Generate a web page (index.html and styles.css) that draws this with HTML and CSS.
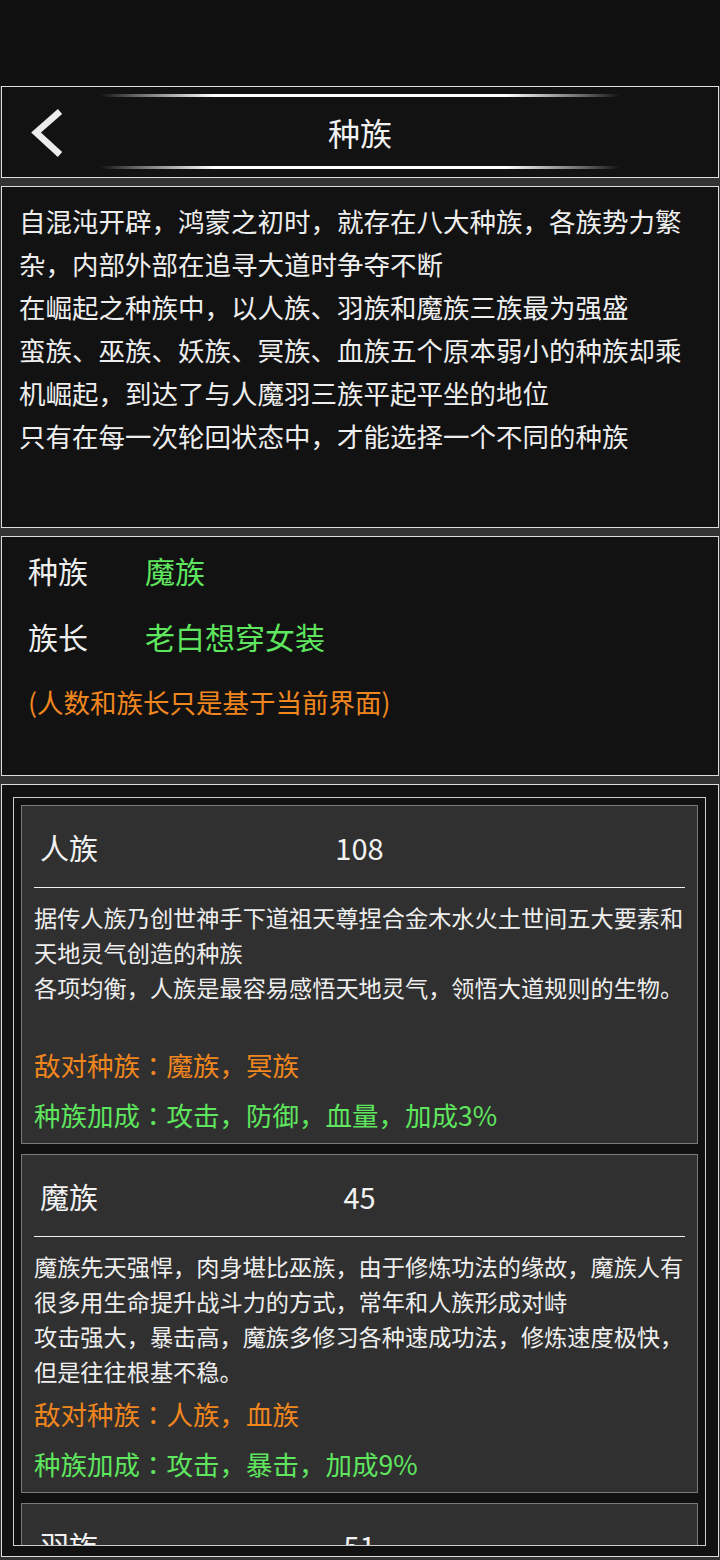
FILE: index.html
```html
<!DOCTYPE html>
<html lang="zh-CN">
<head>
    <meta charset="UTF-8">
    <meta name="viewport" content="width=device-width, initial-scale=1.0">
    <title>种族</title>
    <link rel="stylesheet" href="styles.css">
</head>
<body>
    <div class="status-bar"></div>

    <header class="panel topbar">
        <div class="glow"></div>
        <div class="topbar-row">
            <a class="back" href="#">
                <svg width="36" height="50" viewBox="0 0 36 50">
                    <polyline points="31,4.5 7,25.5 31,47.5" fill="none" stroke="#ececec" stroke-width="6.5" stroke-linejoin="miter"/>
                </svg>
            </a>
            <h1>种族</h1>
            <span></span>
        </div>
        <div class="glow"></div>
    </header>

    <section class="panel intro">
        <p>自混沌开辟，鸿蒙之初时，就存在八大种族，各族势力繁杂，内部外部在追寻大道时争夺不断</p>
        <p>在崛起之种族中，以人族、羽族和魔族三族最为强盛</p>
        <p>蛮族、巫族、妖族、冥族、血族五个原本弱小的种族却乘机崛起，到达了与人魔羽三族平起平坐的地位</p>
        <p>只有在每一次轮回状态中，才能选择一个不同的种族</p>
    </section>

    <section class="panel info">
        <div class="info-row">
            <span>种族</span>
            <span class="info-value">魔族</span>
        </div>
        <div class="info-row">
            <span>族长</span>
            <span class="info-value">老白想穿女装</span>
        </div>
        <p class="note">(人数和族长只是基于当前界面)</p>
    </section>

    <section class="panel list">
        <div class="list-frame">
            <div class="race-card">
                <div class="race-head">
                    <span class="race-name">人族</span>
                    <span class="race-count">108</span>
                </div>
                <div class="race-divider"></div>
                <div class="race-desc">
                    <p>据传人族乃创世神手下道祖天尊捏合金木水火土世间五大要素和天地灵气创造的种族</p>
                    <p>各项均衡，人族是最容易感悟天地灵气，领悟大道规则的生物。</p>
                </div>
                <p class="race-stat enemy">敌对种族<span class="colon" lang="ja">：</span>魔族，冥族</p>
                <p class="race-stat bonus">种族加成<span class="colon" lang="ja">：</span>攻击，防御，血量，加成3%</p>
            </div>

            <div class="race-card">
                <div class="race-head">
                    <span class="race-name">魔族</span>
                    <span class="race-count">45</span>
                </div>
                <div class="race-divider"></div>
                <div class="race-desc">
                    <p>魔族先天强悍，肉身堪比巫族，由于修炼功法的缘故，魔族人有很多用生命提升战斗力的方式，常年和人族形成对峙</p>
                    <p>攻击强大，暴击高，魔族多修习各种速成功法，修炼速度极快，但是往往根基不稳。</p>
                </div>
                <p class="race-stat enemy">敌对种族<span class="colon" lang="ja">：</span>人族，血族</p>
                <p class="race-stat bonus">种族加成<span class="colon" lang="ja">：</span>攻击，暴击，加成9%</p>
            </div>

            <div class="race-card">
                <div class="race-head">
                    <span class="race-name">羽族</span>
                    <span class="race-count">51</span>
                </div>
                <div class="race-divider"></div>
            </div>
        </div>
    </section>
</body>
</html>
```

FILE: styles.css
```css
body {
    margin: 0;
    background-color: #333;
    font-family: "Noto Sans CJK SC", "Noto Sans", sans-serif;
    color: #eee;
}
p {
    margin: 0;
}
.status-bar {
    height: 86px;
    background: #111;
}
.panel {
    margin: 0 1px 8px;
    border: 1px solid #ddd;
    background: #121212;
    box-sizing: border-box;
}

/* header */
.topbar {
    height: 92px;
    padding: 7px 0 8px;
}
.glow {
    width: 520px;
    height: 3px;
    margin: 0 auto;
    border-radius: 2px;
    background: linear-gradient(90deg, rgba(255, 255, 255, 0), #666 7%, #fff 22%, #fff 78%, #666 93%, rgba(255, 255, 255, 0));
}
.topbar-row {
    height: 69px;
    display: grid;
    grid-template-columns: 1fr auto 1fr;
    align-items: center;
}
.back {
    display: flex;
    padding-left: 27px;
}
.topbar h1 {
    margin: 0;
    font-size: 32px;
    font-weight: normal;
    color: #f2f2f2;
}

/* intro text */
.intro {
    height: 342px;
    padding: 12px 18px 0 17px;
    font-size: 26.5px;
    line-height: 43px;
}

/* current race */
.info {
    height: 240px;
    padding-left: 26px;
}
.info-row {
    display: grid;
    grid-template-columns: 117px 1fr;
    font-size: 30px;
    line-height: 66px;
}
.info-value {
    color: #5fe65f;
}
.note {
    font-size: 26.5px;
    line-height: 66px;
    color: #f0861e;
}

/* race list */
.list {
    height: 773px;
    margin-bottom: 0;
    padding: 12px 12px 11px 11px;
    background: #111;
}
.list-frame {
    height: 749px;
    padding: 7px;
    border: 1px solid #ccc;
    box-sizing: border-box;
    overflow: hidden;
}
.race-card {
    margin-bottom: 10px;
    padding: 0 12px 3px;
    border: 1px solid #7a7a7a;
    background: #303030;
}
.race-head {
    height: 80px;
    padding-top: 1px;
    display: grid;
    grid-template-columns: 1fr auto 1fr;
    align-items: center;
    font-size: 29px;
    color: #f2f2f2;
}
.race-name {
    padding-left: 6px;
}
.race-divider {
    height: 1px;
    background: #eee;
}
.race-desc {
    margin-top: 12px;
    min-height: 140px;
    font-size: 23.2px;
    line-height: 35px;
}
.race-stat {
    font-size: 26.5px;
    line-height: 50px;
}
.colon {
    font-family: "Noto Sans CJK JP", "Noto Sans CJK SC", sans-serif;
}
.enemy {
    color: #f0861e;
}
.bonus {
    color: #5fe65f;
}
```
